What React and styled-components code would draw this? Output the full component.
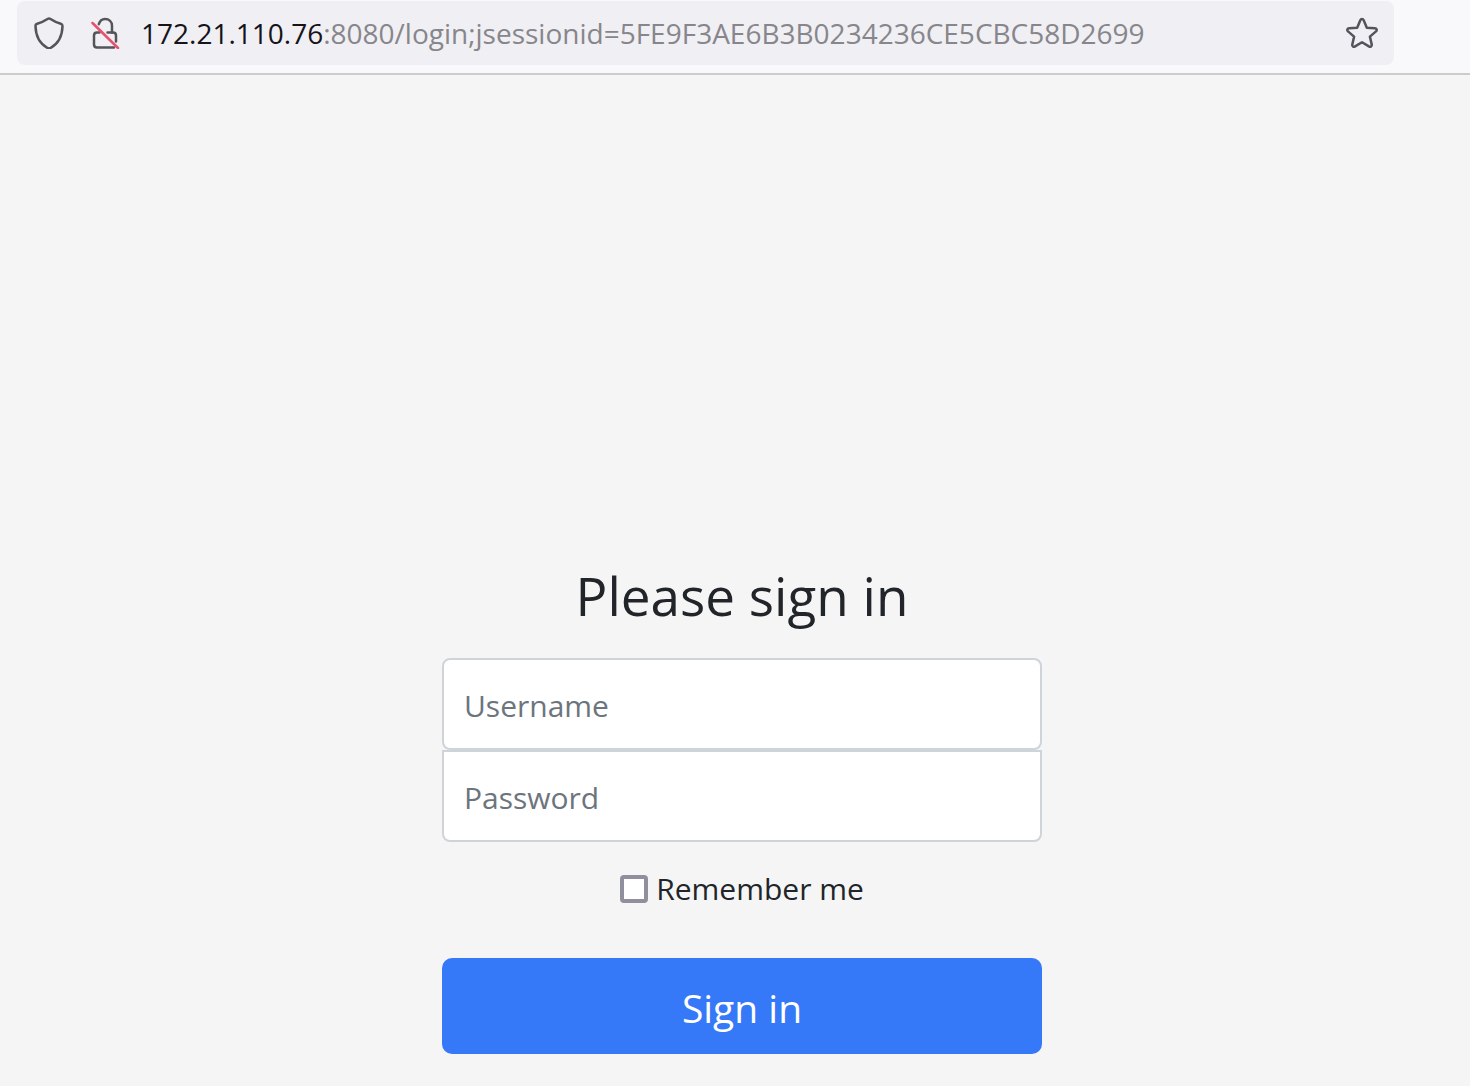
import React, { useState } from 'react';
import styled, { createGlobalStyle } from 'styled-components';

const App = () => {
  const [username, setUsername] = useState('');
  const [password, setPassword] = useState('');
  const [remember, setRemember] = useState(false);

  return (
    <>
      <GlobalStyle />
      <Toolbar>
        <UrlBar>
          <SiteInfo>
            <IconButton type="button" aria-label="Tracking protection">
              <ShieldIcon />
            </IconButton>
            <IconButton type="button" aria-label="Connection is not secure">
              <LockIcon />
            </IconButton>
          </SiteInfo>
          <Url role="textbox" aria-label="Address" tabIndex={0}>
            <Host>172.21.110.76</Host>
            :8080/login;jsessionid=5FE9F3AE6B3B0234236CE5CBC58D2699
          </Url>
          <IconButton type="button" aria-label="Bookmark this page">
            <StarIcon />
          </IconButton>
        </UrlBar>
      </Toolbar>
      <Main>
        <Form onSubmit={e => e.preventDefault()}>
          <Title>Please sign in</Title>
          <Field
            type="text"
            aria-label="Username"
            placeholder="Username"
            value={username}
            onChange={e => setUsername(e.target.value)}
          />
          <Field
            type="password"
            aria-label="Password"
            placeholder="Password"
            $joined
            value={password}
            onChange={e => setPassword(e.target.value)}
          />
          <Remember>
            <Checkbox
              type="checkbox"
              checked={remember}
              onChange={e => setRemember(e.target.checked)}
            />
            Remember me
          </Remember>
          <SubmitButton type="submit">Sign in</SubmitButton>
        </Form>
      </Main>
    </>
  );
};

export default App;

const ShieldIcon = () => (
  <Icon viewBox="0 0 32 32">
    <path d="M16 1.5 C16.5 1.5 17 1.7 17.5 2 C20.5 4 24 5.6 27.8 6.7 C29 7 29.5 7.8 29.5 9 C29.3 19 25.5 26.500 17.5 31 C16.5 31.5 15.5 31.5 14.5 31 C6.5 26.5 2.7 19 2.5 9 C2.5 7.8 3 7 4.2 6.7 C8 5.6 11.5 4 14.5 2 C15 1.7 15.5 1.5 16 1.5 Z" />
  </Icon>
);

const LockIcon = () => (
  <Icon viewBox="0 0 32 32">
    <path d="M9.8 7.2 C10.8 4 13 2 16 2 C20 2 23 4.8 23 8.8 V15.5" />
    <path d="M10.5 15.5 H8 Q5 15.5 5 18.5 V27.5 Q5 30.5 8 30.5 H25" />
    <path d="M18.5 15.5 H24 Q27 15.5 27 18.5 V24.5" />
    <Slash d="M3.5 6 L29 31" />
  </Icon>
);

const StarIcon = () => (
  <Icon viewBox="0 0 32 32">
    <path d="M14.3 3.3 C15 1.7 17 1.7 17.7 3.3 L20.8 10.8 L28.9 11.3 C30.7 11.4 31.3 13.2 30 14.4 L23.9 19.6 L25.700 27.4 C26.1 29.2 24.5 30.3 22.9 29.4 L16 25.2 L9.1 29.4 C7.5 30.3 5.9 29.2 6.3 27.4 L8.1 19.6 L2 14.4 C0.7 13.2 1.3 11.4 3.1 11.3 L11.2 10.8 Z" />
  </Icon>
);

const GlobalStyle = createGlobalStyle`
  * {
    box-sizing: border-box;
  }

  body {
    margin: 0;
    background-color: #f5f5f5;
    color: #212529;
    font-family: 'Open Sans', 'Noto Sans', sans-serif;
    font-size: 30px;
  }
`;

const Toolbar = styled.header`
  padding: 1px 76px 8px 17px;
  background-color: #f9f9fb;
  border-bottom: 2px solid #cccccf;
`;

const UrlBar = styled.div`
  display: flex;
  align-items: center;
  height: 64px;
  padding: 0 16px;
  gap: 20px;
  border-radius: 8px;
  background-color: #f0eff4;
`;

const SiteInfo = styled.div`
  display: flex;
  gap: 24px;
`;

const IconButton = styled.button`
  display: flex;
  flex-shrink: 0;
  padding: 0;
  border: 0;
  background: none;
  cursor: pointer;
`;

const Icon = styled.svg`
  width: 32px;
  height: 32px;
  fill: none;
  stroke: #55545a;
  stroke-width: 2.5;
  stroke-linecap: round;
  stroke-linejoin: round;
`;

const Slash = styled.path`
  stroke: #e8506e;
`;

const Url = styled.div`
  flex: 1;
  min-width: 0;
  overflow: hidden;
  white-space: nowrap;
  font-size: 28px;
  line-height: 40px;
  color: #87868b;
`;

const Host = styled.span`
  color: #15141a;
`;

const Main = styled.main`
  padding: 488px 0 32px 14px;
`;

const Form = styled.form`
  display: flex;
  flex-direction: column;
  max-width: 600px;
  margin: 0 auto;
`;

const Title = styled.h1`
  margin: 0 0 30px;
  font-size: 53px;
  font-weight: 400;
  line-height: 65px;
  text-align: center;
`;

const Field = styled.input`
  width: 100%;
  height: 92px;
  padding: 2px 20px 0;
  border: 2px solid #ced4da;
  border-radius: ${({ $joined }) => ($joined ? '0 0 8px 8px' : '8px')};
  background-color: #fff;
  color: #495057;
  font-family: inherit;
  font-size: 30px;

  &::placeholder {
    color: #6c757d;
    opacity: 1;
  }
`;

const Remember = styled.label`
  display: flex;
  align-items: center;
  justify-content: center;
  gap: 8px;
  margin: 24px 0 46px;
  line-height: 46px;
`;

const Checkbox = styled.input`
  appearance: none;
  width: 28px;
  height: 28px;
  margin: 0;
  border: 4px solid #8f8f9d;
  border-radius: 4px;
  background-color: #fff;

  &:checked {
    border-color: #3478f6;
    background-color: #3478f6;
  }
`;

const SubmitButton = styled.button`
  height: 96px;
  padding: 2px 16px 0;
  border: 0;
  border-radius: 10px;
  background-color: #3579f8;
  color: #fff;
  font-family: inherit;
  font-size: 39px;
  cursor: pointer;
`;
